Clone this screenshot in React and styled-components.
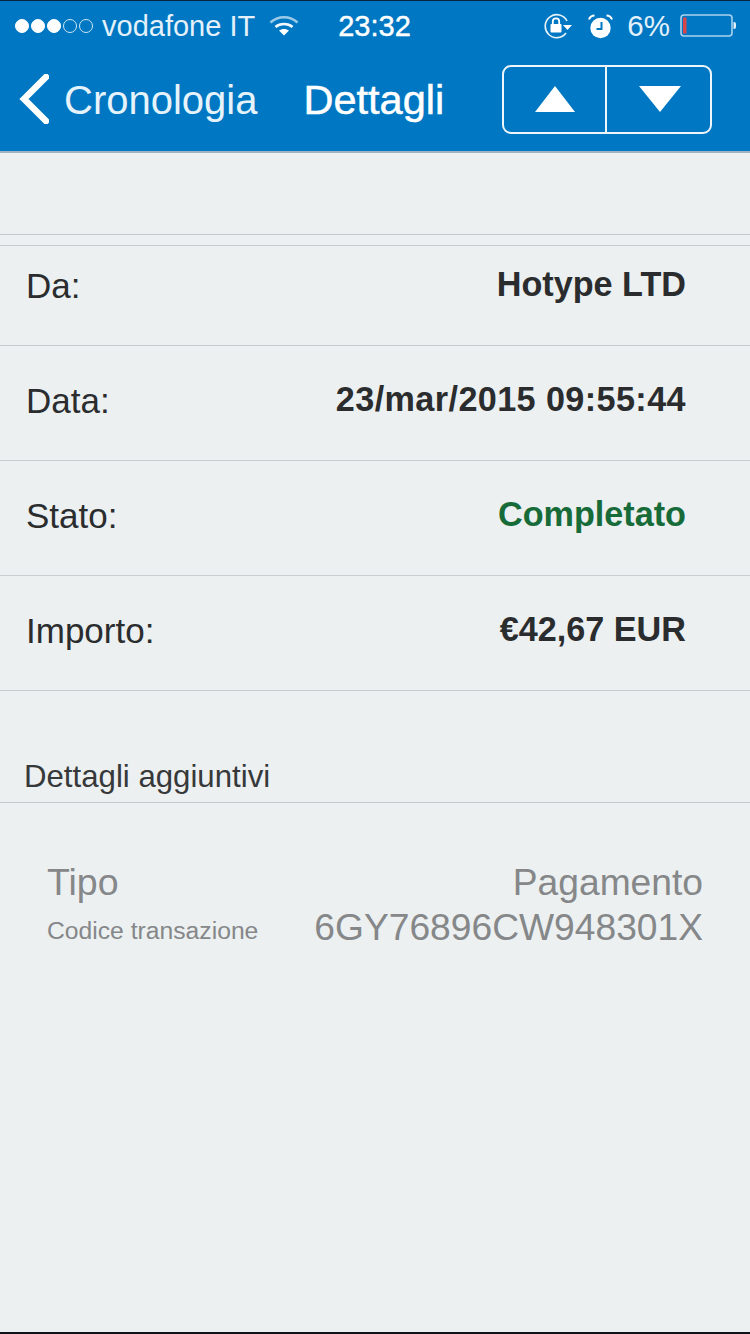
import React from "react";
import styled, { createGlobalStyle } from "styled-components";

const Global = createGlobalStyle`
  html, body { margin: 0; padding: 0; background: #ecf0f1; }
  body { font-family: "Liberation Sans", Arial, sans-serif; }
`;
const Page = styled.div`
  width: 750px; height: 1334px; display: flex; flex-direction: column;
  background: #ecf0f1; overflow: hidden; border-bottom: 2px solid #10141a; box-sizing: border-box;
`;
const Header = styled.header`
  height: 153px; box-sizing: border-box; background: #0077c2; color: #fff;
  border-top: 1px solid #0b2540; border-bottom: 2px solid #9fb3c2;
  display: flex; flex-direction: column; flex-shrink: 0;
`;
const Status = styled.div`
  height: 50px; display: grid; grid-template-columns: 1fr auto 1fr; align-items: center;
  padding: 0 14px 0 15px; font-size: 29px; color: #e4f1fa;
`;
const StatusLeft = styled.div`display: flex; align-items: center; gap: 9px;`;
const StatusRight = styled.div`display: flex; align-items: center; justify-content: flex-end;`;
const Clock = styled.div`font-size: 29px; color: #fff; -webkit-text-stroke: 0.4px #fff; margin-left: -2px;`;
const Dots = styled.div`display: flex; gap: 2px; align-items: center;`;
const Dot = styled.span`
  width: 14px; height: 14px; border-radius: 50%; box-sizing: border-box;
  border: 1px solid ${p => (p.$on ? "#fff" : "#cfe6f5")};
  background: ${p => (p.$on ? "#fff" : "transparent")};
`;
const WifiSlot = styled.span`display: flex; margin-left: 5px;`;
const Nav = styled.div`
  flex: 1; display: flex; align-items: center; padding: 0 38px 4px 19px;
`;
const Back = styled.div`display: flex; align-items: center; gap: 15px; font-size: 40px; color: #e6f3fb;`;
const BackLabel = styled.span`padding-top: 2px;`;
const Title = styled.div`font-size: 41.5px; margin-left: 46px; padding-top: 2px; -webkit-text-stroke: 0.5px #fff;`;
const Segment = styled.div`
  margin-left: auto; width: 210px; height: 69px; box-sizing: border-box;
  border: 2px solid #eef6fb; border-radius: 9px; display: flex;
`;
const SegButton = styled.div`
  flex: 0 0 ${p => p.$w}px; box-sizing: border-box; display: flex; align-items: center; justify-content: center;
  padding-left: ${p => p.$inset || 0}px;
  & + & { border-left: 2px solid #eef6fb; }
`;
const Spacer = styled.div`height: 81px; border-bottom: 1px solid #c4c7ca;`;
const List = styled.div`
  margin-top: 10px; border-top: 1px solid #c9cccf;
`;
const Row = styled.div`
  height: ${p => p.$h}px; box-sizing: border-box; border-bottom: 1px solid #c9cccf;
  display: flex; align-items: flex-end; justify-content: space-between;
  padding: 0 64px 39px 26px; font-size: 35px; line-height: 41px; color: #2a2c2e;
`;
const Value = styled.span`
  font-weight: 700; font-size: 34.2px; position: relative; top: -1px;
  letter-spacing: ${p => p.$spacing || 0}px; color: ${p => p.$color || "#2a2c2e"};
`;
const SectionTitle = styled.div`
  margin-top: 69px; padding-left: 24px; box-sizing: border-box; height: 43px;
  font-size: 31.2px; line-height: 34px; color: #36383a; border-bottom: 1px solid #c4c8cb;
`;
const Details = styled.div`
  padding: 57px 47px 0 47px; color: #858789; display: flex; flex-direction: column;
`;
const DetailRow = styled.div`display: flex; justify-content: space-between; align-items: center; height: 45px;`;
const DetailLabel = styled.span`
  font-size: ${p => (p.$small ? 24.7 : 37.5)}px;
  padding-top: ${p => (p.$small ? 6 : 0)}px;
`;
const DetailValue = styled.span`font-size: 37.2px;`;
const Percent = styled.span`margin: 0 10px 0 14px; font-size: 29.5px;`;

const Wifi = () => (
  <svg width="30" height="22" viewBox="0 0 30 22">
    <path d="M1.5 7.5 C9 0.5 21 0.5 28.5 7.5" stroke="#9ccbe8" strokeWidth="2.6" fill="none" />
    <path d="M6.5 12 C11 8 19 8 23.5 12" stroke="#f2f8fc" strokeWidth="2.6" fill="none" />
    <path d="M10 15.5 C13 13.4 17 13.4 20 15.5 L15 20.5 Z" fill="#fff" />
  </svg>
);
const RotationLock = () => (
  <svg width="29" height="26" viewBox="0 0 29 26" style={{ marginRight: 15 }}>
    <path d="M22 20 A11.5 11.5 0 1 1 23 8" stroke="#e8f3fa" strokeWidth="1.6" fill="none" />
    <path d="M19 12 L28 12 L23.5 17 Z" fill="#fff" />
    <rect x="6.5" y="11" width="11" height="8.5" rx="1" fill="#fff" />
    <path d="M8.8 11 V8.6 A3.2 3.2 0 0 1 15.2 8.6 V11" stroke="#fff" strokeWidth="1.8" fill="none" />
  </svg>
);
const Alarm = () => (
  <svg width="25" height="25" viewBox="0 0 25 25">
    <circle cx="12.5" cy="14" r="10.2" fill="#fff" />
    <path d="M13.5 8 V15 H8.5" stroke="#0077c2" strokeWidth="2" fill="none" />
    <path d="M1 5.5 Q2.5 1.5 6.5 1.5 M24 5.5 Q22.5 1.5 18.5 1.5" stroke="#fff" strokeWidth="2" fill="none" />
  </svg>
);
const Battery = () => (
  <svg width="56" height="24" viewBox="0 0 56 24">
    <rect x="1" y="1" width="51" height="21" rx="3" stroke="#a9d3ee" strokeWidth="1.6" fill="none" />
    <rect x="3" y="3.5" width="3.5" height="16" fill="#d8464a" />
    <path d="M53.5 8 H54 Q56 8 56 10 V13 Q56 15 54 15 H53.5 Z" fill="#e4f1fa" />
  </svg>
);
const Chevron = () => (
  <svg width="30" height="50" viewBox="0 0 30 50">
    <path d="M27 3 L5 25 L27 47" stroke="#fff" strokeWidth="6.5" fill="none" strokeLinecap="round" />
  </svg>
);
const Triangle = ({ down }) => (
  <svg width="42" height="26" viewBox="0 0 42 26">
    <path d={down ? "M0 0 H42 L21 26 Z" : "M21 0 L41 26 H1 Z"} fill="#fff" />
  </svg>
);

const rows = [
  { label: "Da:", value: "Hotype LTD", h: 100 },
  { label: "Data:", value: "23/mar/2015 09:55:44", h: 115, spacing: 0.4 },
  { label: "Stato:", value: "Completato", h: 115, color: "#176b39" },
  { label: "Importo:", value: "€42,67 EUR", h: 115 },
];

export default function App() {
  return (
    <Page>
      <Global />
      <Header>
        <Status>
          <StatusLeft>
            <Dots>
              {[1, 1, 1, 0, 0].map((on, i) => <Dot key={i} $on={!!on} />)}
            </Dots>
            <span>vodafone IT</span>
            <WifiSlot><Wifi /></WifiSlot>
          </StatusLeft>
          <Clock>23:32</Clock>
          <StatusRight>
            <RotationLock />
            <Alarm />
            <Percent>6%</Percent>
            <Battery />
          </StatusRight>
        </Status>
        <Nav>
          <Back><Chevron /><BackLabel>Cronologia</BackLabel></Back>
          <Title>Dettagli</Title>
          <Segment>
            <SegButton $w={101}><Triangle /></SegButton>
            <SegButton $w={105} $inset={3}><Triangle down /></SegButton>
          </Segment>
        </Nav>
      </Header>
      <Spacer />
      <List>
        {rows.map(r => (
          <Row key={r.label} $h={r.h}>
            <span>{r.label}</span>
            <Value $color={r.color} $spacing={r.spacing}>{r.value}</Value>
          </Row>
        ))}
      </List>
      <SectionTitle>Dettagli aggiuntivi</SectionTitle>
      <Details>
        <DetailRow>
          <DetailLabel>Tipo</DetailLabel>
          <DetailValue>Pagamento</DetailValue>
        </DetailRow>
        <DetailRow>
          <DetailLabel $small>Codice transazione</DetailLabel>
          <DetailValue>6GY76896CW948301X</DetailValue>
        </DetailRow>
      </Details>
    </Page>
  );
}
